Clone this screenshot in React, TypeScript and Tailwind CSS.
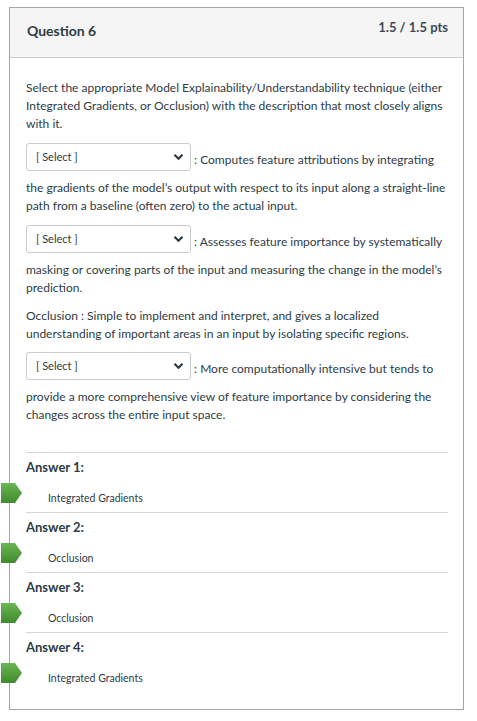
import React from 'react';

const SelectBox = () => (
  <span className="inline-flex items-center justify-between w-[165px] h-[28px] pl-[9px] pr-[6px] border border-[#c7cdd1] rounded-[3px] bg-white align-middle mb-[8px]">
    <span className="text-[11px] text-[#2d3b45]">[ Select ]</span>
    <svg width="11" height="8" viewBox="0 0 11 8">
      <path d="M1.5 1.8 L5.5 5.8 L9.5 1.8" fill="none" stroke="#2d3b45" strokeWidth="2.2" />
    </svg>
  </span>
);

const Marker = () => (
  <svg className="absolute left-[-25px] top-[-6px]" width="21" height="20" viewBox="0 0 21 20">
    <defs>
      <linearGradient id="grn" x1="0" y1="0" x2="0" y2="1">
        <stop offset="0" stopColor="#6cb553" />
        <stop offset="1" stopColor="#3f8a2e" />
      </linearGradient>
    </defs>
    <polygon points="0,0 14,0 21,10 14,20 0,20" fill="url(#grn)" />
  </svg>
);

const answers = [
  { label: 'Answer 1:', value: 'Integrated Gradients' },
  { label: 'Answer 2:', value: 'Occlusion' },
  { label: 'Answer 3:', value: 'Occlusion' },
  { label: 'Answer 4:', value: 'Integrated Gradients' },
];

export default function App() {
  return (
    <div className="bg-white min-h-[721px] px-[9px] pt-[7px] font-['Lato','Liberation_Sans',sans-serif] text-[#2d3b45]">
      <div className="border border-[#a5a5a5] w-[455px]">
        {/* header */}
        <div className="flex justify-between items-start h-[50px] bg-[#f5f5f5] border-b border-[#c7cdd1] pl-[17px] pr-[15px]">
          <h2 className="text-[14px] font-bold pt-[13px] leading-[20px]">Question 6</h2>
          <span className="text-[13px] font-bold pt-[10px] leading-[18px] text-[#3d4a54]">1.5 / 1.5 pts</span>
        </div>

        <div className="pl-[16px] pr-[12px] pt-[21px] pb-[22px] text-[12px] leading-[18px]">
          <p>
            Select the appropriate Model Explainability/Understandability technique (either Integrated Gradients, or Occlusion) with the description that most closely aligns with it.
          </p>
          <p className="mt-[10px]">
            <SelectBox /> : Computes feature attributions by integrating the gradients of the model’s output with respect to its input along a straight-line path from a baseline (often zero) to the actual input.
          </p>
          <p className="mt-[10px]">
            <SelectBox /> : Assesses feature importance by systematically masking or covering parts of the input and measuring the change in the model’s prediction.
          </p>
          <p className="mt-[10px]">
            Occlusion : Simple to implement and interpret, and gives a localized understanding of important areas in an input by isolating specific regions.
          </p>
          <p className="mt-[9px]">
            <SelectBox /> : More computationally intensive but tends to provide a more comprehensive view of feature importance by considering the changes across the entire input space.
          </p>

          <div className="mt-[28px] mr-[3px]">
            {answers.map((a, i) => (
              <div key={i} className={`border-t border-[#d6d6d6] pt-[5px] ${i < answers.length - 1 ? 'pb-[5px]' : ''}`}>
                <div className="text-[13px] font-bold leading-[18px]">{a.label}</div>
                <div className="relative mt-[13px] pl-[22px] text-[10.5px] leading-[18px]">
                  <Marker />
                  {a.value}
                </div>
              </div>
            ))}
          </div>
        </div>
      </div>
    </div>
  );
}
